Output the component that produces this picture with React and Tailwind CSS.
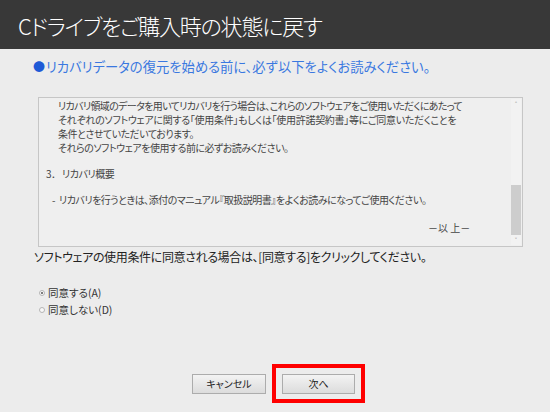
import React from "react";

const jp = { fontFamily: '"Noto Sans CJK JP", "Noto Sans", sans-serif' };

export default function App() {
  return (
    <div
      className="w-[550px] h-[412px] bg-[#ececec] flex flex-col overflow-hidden text-[#333]"
      style={jp}
    >
      <div className="h-[49px] bg-[#383838] flex items-center pl-[18px] shrink-0">
        <span className="text-white text-[22px] font-light leading-none tracking-[-1.2px] [font-feature-settings:'palt']">
          Cドライブをご購入時の状態に戻す
        </span>
      </div>

      <div className="pl-[33px] pt-[9px] h-[48px] text-[#3a78e0] text-[13.3px] leading-[18px] [font-feature-settings:'palt'] flex items-start">
        <span className="text-[#1e5ad6] text-[12px] mr-[1px]">●</span>
        <span>リカバリデータの復元を始める前に、必ず以下をよくお読みください。</span>
      </div>

      <div className="ml-[38px] w-[485px] h-[150px] border border-[#c6c6c6] bg-[#efefef] flex shrink-0">
        <div className="flex-1 pt-[1px] pl-[6px] text-[10px] leading-[14px] text-[#444] tracking-[-0.5px] [font-feature-settings:'palt']">
          <div className="pl-[13px] tracking-[-0.65px]">リカバリ領域のデータを用いてリカバリを行う場合は、これらのソフトウェアをご使用いただくにあたって</div>
          <div className="pl-[13px] tracking-[-0.3px]">それぞれのソフトウェアに関する「使用条件」もしくは「使用許諾契約書」等にご同意いただくことを</div>
          <div className="pl-[13px]">条件とさせていただいております。</div>
          <div className="pl-[13px]">それらのソフトウェアを使用する前に必ずお読みください。</div>
          <div className="h-[12px]" />
          <div className="pl-[1px]">3<span className="inline-block w-[11px] [font-feature-settings:normal]">．</span>リカバリ概要</div>
          <div className="h-[12px]" />
          <div className="pl-[7px]">-<span className="inline-block w-[4px]" />リカバリを行うときは、添付のマニュアル『取扱説明書』をよくお読みになってご使用ください。</div>
          <div className="h-[14px]" />
          <div className="pl-[383px] tracking-[0px]">－以 上－</div>
        </div>
        <div className="w-[10px] mr-[1px] my-[1px] flex flex-col items-center bg-[#f2f2f2]">
          <div className="h-[10px] text-[7px] leading-[10px] text-[#666]">˄</div>
          <div className="flex-1 w-full flex flex-col">
            <div className="flex-1" />
            <div className="h-[50px] bg-[#cdcdcd]" />
          </div>
          <div className="h-[10px] text-[7px] leading-[10px] text-[#666]">˅</div>
        </div>
      </div>

      <div className="pl-[34px] pt-[1px] text-[12px] leading-[18px] text-[#222] tracking-[-0.35px] [font-feature-settings:'palt']">
        ソフトウェアの使用条件に同意される場合は、[同意する]をクリックしてください。
      </div>

      <div className="pl-[39px] pt-[18px] flex flex-col text-[10.5px] leading-[17px] text-[#333] [font-feature-settings:'palt']">
        <label className="flex items-center gap-[3px]">
          <span className="w-[6px] h-[6px] rounded-full border border-[#b5b5b5] bg-[#f8f8f8] flex items-center justify-center">
            <span className="w-[2px] h-[2px] rounded-full bg-[#555]" />
          </span>
          <span>同意する(A)</span>
        </label>
        <label className="flex items-center gap-[3px]">
          <span className="w-[6px] h-[6px] rounded-full border border-[#b5b5b5] bg-[#f8f8f8]" />
          <span>同意しない(D)</span>
        </label>
      </div>

      <div className="flex-1" />

      <div className="flex items-center pl-[192px] pb-[9px] gap-[6px]">
        <button className="w-[74px] h-[20px] border border-[#acacac] bg-gradient-to-b from-[#f3f3f3] to-[#dcdcdc] text-[10px] text-[#222] flex items-center justify-center [font-feature-settings:'palt']">
          キャンセル
        </button>
        <div className="border-[4px] border-[#ff0000] w-[93px] h-[39px] flex items-center justify-center">
          <button className="w-[73px] h-[20px] border border-[#acacac] bg-gradient-to-b from-[#f3f3f3] to-[#dcdcdc] text-[10px] text-[#222] flex items-center justify-center">
            次へ
          </button>
        </div>
      </div>
    </div>
  );
}
